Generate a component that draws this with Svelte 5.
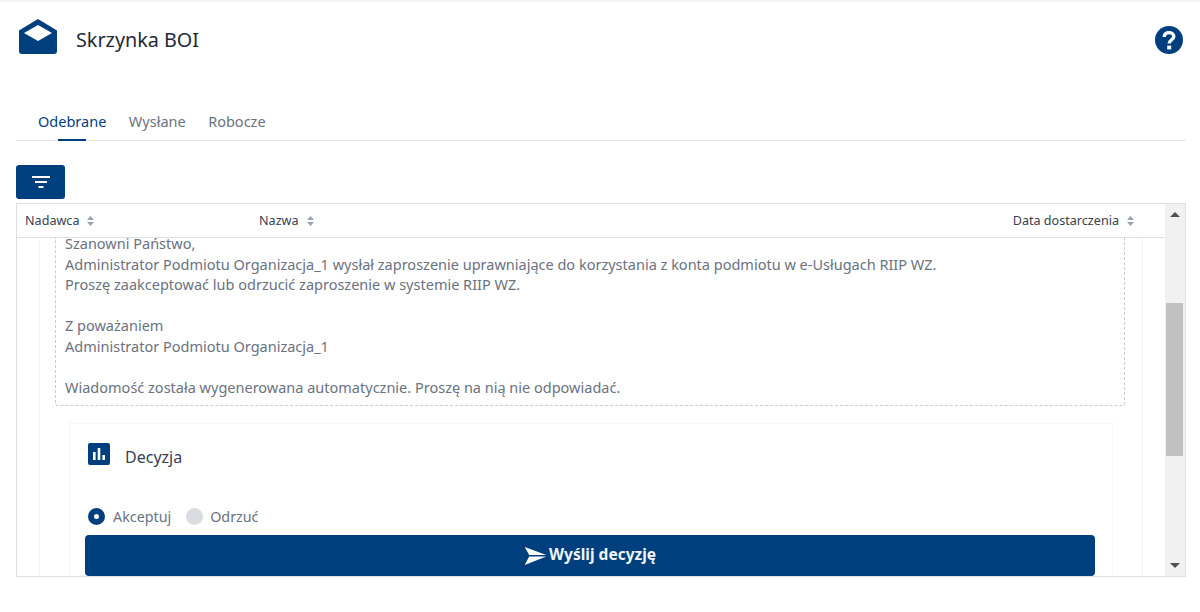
<script>
  const columns = [
    { name: 'Nadawca', cls: 'sender' },
    { name: 'Nazwa', cls: 'title' },
    { name: 'Data dostarczenia', cls: 'date' },
  ]
  const tabs = ['Odebrane', 'Wysłane', 'Robocze']
  const lines = [
    'Szanowni Państwo,',
    'Administrator Podmiotu Organizacja_1 wysłał zaproszenie uprawniające do korzystania z konta podmiotu w e-Usługach RIIP WZ.',
    'Proszę zaakceptować lub odrzucić zaproszenie w systemie RIIP WZ.',
    '',
    'Z poważaniem',
    'Administrator Podmiotu Organizacja_1',
    '',
    'Wiadomość została wygenerowana automatycznie. Proszę na nią nie odpowiadać.',
  ]
</script>

<div class="page">
  <header>
    <svg class="mail" width="38" height="35" viewBox="0 0 38 35">
      <path fill="#003f7d" d="M19 0 L38 11.5 V32 Q38 35 35 35 H3 Q0 35 0 32 V11.5 Z" />
      <path fill="#fff" d="M19 6 L33 14 L19 22 L5 14 Z" />
    </svg>
    <h1>Skrzynka BOI</h1>
    <svg class="help" width="28" height="28" viewBox="0 0 28 28">
      <circle cx="14" cy="14" r="14" fill="#003f7d" />
      <path fill="none" stroke="#fff" stroke-width="3.4" d="M9.2 11 C9.4 8 11.4 6.6 14 6.6 C16.8 6.6 18.8 8.2 18.8 10.6 C18.8 13.6 14.2 14 14.2 17.6" />
      <rect x="12.2" y="19.6" width="4" height="3.8" fill="#fff" />
    </svg>
  </header>

  <nav>
    {#each tabs as tab, i}
      <span class="tab" class:active={i === 0}>{tab}</span>
    {/each}
  </nav>

  <button class="filter" aria-label="Filtruj">
    <svg width="18" height="12" viewBox="0 0 18 12">
      <rect x="0" y="0" width="18" height="2" fill="#fff" />
      <rect x="3" y="5" width="12" height="2" fill="#fff" />
      <rect x="6.5" y="10" width="5" height="2" fill="#fff" />
    </svg>
  </button>

  <section class="table">
    <div class="main">
      <div class="head">
        {#each columns as col}
          <div class="col {col.cls}">
            {col.name}
            <svg class="sort" width="7" height="10" viewBox="0 0 7 10">
              <path fill="#9aa3af" d="M3.5 0 L7 4 H0 Z M3.5 10 L0 6 H7 Z" />
            </svg>
          </div>
        {/each}
      </div>
      <div class="body">
        <div class="row">
          <div class="message">
            {#each lines as line}
              <p>{line}</p>
            {/each}
          </div>
          <div class="card">
            <div class="card-title">
              <svg width="22" height="22" viewBox="0 0 22 22">
                <rect width="22" height="22" rx="2" fill="#003f7d" />
                <rect x="5" y="9" width="2.6" height="8" fill="#fff" />
                <rect x="9.7" y="5" width="2.6" height="12" fill="#fff" />
                <rect x="14.4" y="12" width="2.6" height="5" fill="#fff" />
              </svg>
              <h2>Decyzja</h2>
            </div>
            <div class="radios">
              <span class="radio on"></span><span>Akceptuj</span>
              <span class="radio"></span><span>Odrzuć</span>
            </div>
            <button class="send">
              <svg width="23" height="18" viewBox="0 0 24 20">
                <path fill="#fff" d="M0 0 L24 9 H5 Z M0 20 L24 10.5 H5 Z" />
              </svg>
              Wyślij decyzję
            </button>
          </div>
        </div>
      </div>
    </div>
    <div class="scrollbar">
      <span class="arrow up"></span>
      <span class="thumb"></span>
      <span class="arrow down"></span>
    </div>
  </section>
</div>

<style>
  :global(body) {
    background: #fff;
    font-family: "Noto Sans", sans-serif;
    color: #4b5563;
  }

  .page {
    height: 612px;
    box-sizing: border-box;
    padding: 2px 14px 0 16px;
    display: flex;
    flex-direction: column;
    overflow: hidden;
    background: linear-gradient(#f3f3f3, #f3f3f3) top / 100% 2px no-repeat;
  }

  header {
    height: 72px;
    flex: none;
    display: flex;
    align-items: flex-start;
    padding: 17px 3px 0 3px;
  }

  .mail {
    flex: none;
  }

  h1 {
    margin: 7px 0 0 19px;
    font-size: 19.8px;
    font-weight: 400;
    line-height: 27px;
    color: #1f2937;
  }

  .help {
    margin: 7px 0 0 auto;
    flex: none;
  }

  nav {
    margin-top: 16px;
    height: 33px;
    flex: none;
    display: flex;
    gap: 22.5px;
    padding-left: 22px;
    border-bottom: 1px solid #e5e7eb;
  }

  .tab {
    position: relative;
    font-size: 14.5px;
    line-height: 28px;
    color: #6b7280;
  }

  .tab.active {
    color: #003f7d;
  }

  .tab.active::after {
    content: '';
    position: absolute;
    left: 20px;
    bottom: -1px;
    width: 28px;
    height: 2px;
    background: #003f7d;
  }

  button {
    border: 0;
    font-family: inherit;
  }

  .filter {
    margin-top: 24px;
    width: 49px;
    height: 34px;
    padding: 0;
    background: #003f7d;
    border-radius: 3px;
    display: flex;
    align-items: center;
    justify-content: center;
    flex: none;
  }

  .table {
    margin-top: 4px;
    height: 374px;
    box-sizing: border-box;
    border: 1px solid #dcdfe3;
    display: flex;
    flex: none;
    overflow: hidden;
  }

  .main {
    flex: 1;
    min-width: 0;
    display: flex;
    flex-direction: column;
  }

  .head {
    height: 34px;
    flex: none;
    box-sizing: border-box;
    border-bottom: 1px solid #dcdfe3;
    display: flex;
    align-items: center;
    font-size: 12.6px;
    color: #374151;
  }

  .col {
    display: flex;
    align-items: center;
    gap: 8px;
    white-space: nowrap;
  }

  .sender {
    width: 234px;
    padding-left: 8px;
  }

  .title {
    flex: 1;
  }

  .date {
    padding-right: 31px;
  }

  .body {
    flex: 1;
    overflow: hidden;
    padding-left: 22px;
  }

  .row {
    height: 100%;
    box-sizing: border-box;
    width: 1104px;
    padding: 0 17px 0 15px;
    border-left: 1px solid #f3f4f6;
    border-right: 1px solid #f3f4f6;
  }

  .message {
    box-sizing: border-box;
    height: 168px;
    padding: 0 9px;
    border: 1px dashed #c9cdd3;
    border-top: 0;
    border-radius: 0 0 3px 3px;
    font-size: 14.5px;
    line-height: 20.58px;
    color: #6b7280;
  }

  p {
    margin: 0;
    height: 20.58px;
    white-space: nowrap;
    position: relative;
    top: -5px;
  }

  .card {
    margin: 17px 12px 0 14px;
    height: 170px;
    box-sizing: border-box;
    border: 1px solid #f6f6f7;
    border-bottom: 0;
    padding: 19px 17px 0 15px;
  }

  .card-title {
    display: flex;
    align-items: flex-start;
    gap: 15px;
    padding-left: 3px;
  }

  h2 {
    margin: 3px 0 0;
    font-size: 16px;
    font-weight: 400;
    color: #374151;
  }

  .radios {
    margin-top: 38px;
    height: 20px;
    display: flex;
    align-items: center;
    padding-left: 3px;
    font-size: 14.3px;
    color: #6b7280;
  }

  .radio {
    width: 17px;
    height: 17px;
    border-radius: 50%;
    background: #d9dde1;
    margin-right: 7px;
    margin-left: 15px;
    box-sizing: border-box;
    flex: none;
  }

  .radio.on {
    background: #fff;
    border: 6px solid #003f7d;
    margin-left: 0;
    margin-right: 8px;
  }

  .send {
    margin-top: 9px;
    width: 100%;
    height: 41px;
    padding: 0 0 4px;
    background: #003f7d;
    border-radius: 4px;
    color: #f1f5f9;
    font-size: 15.5px;
    font-weight: 700;
    display: flex;
    align-items: center;
    justify-content: center;
  }

  .send svg {
    margin-top: 4px;
    margin-right: 2px;
  }

  .scrollbar {
    width: 20px;
    flex: none;
    background: #f1f1f1;
    position: relative;
    display: flex;
    flex-direction: column;
    align-items: center;
  }

  .thumb {
    position: absolute;
    top: 99px;
    left: 1px;
    width: 17px;
    height: 153px;
    background: #c1c1c1;
  }

  .arrow {
    width: 0;
    height: 0;
    border-left: 5px solid transparent;
    border-right: 5px solid transparent;
  }

  .up {
    margin-top: 8px;
    border-bottom: 5px solid #505050;
  }

  .down {
    margin-top: auto;
    margin-bottom: 8px;
    border-top: 5px solid #505050;
  }
</style>
